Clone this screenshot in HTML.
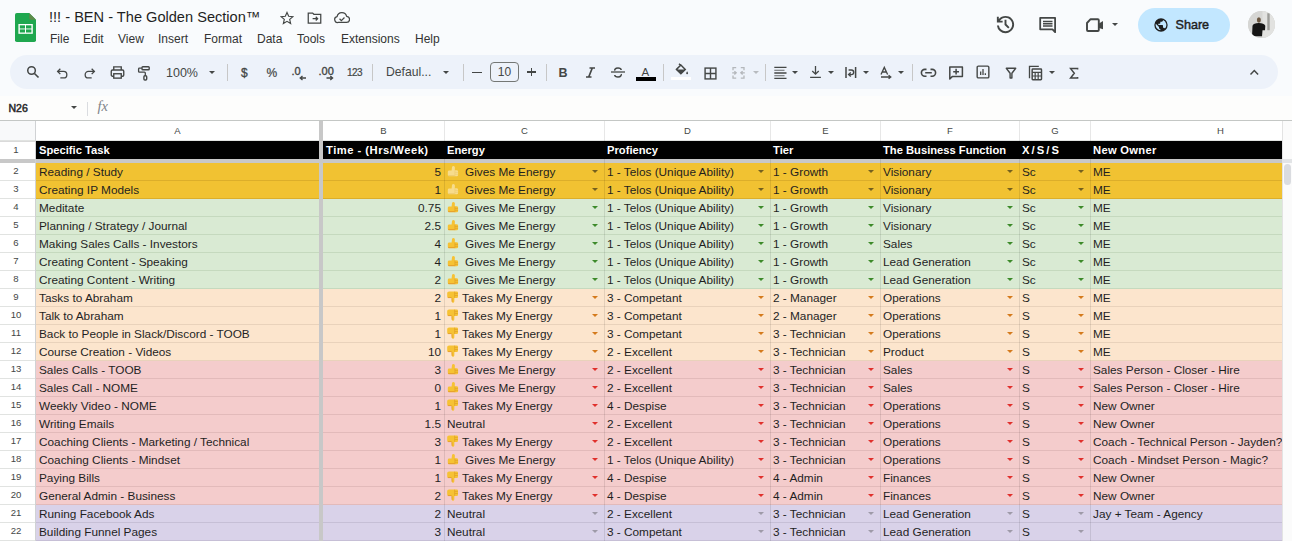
<!DOCTYPE html>
<html><head><meta charset="utf-8">
<style>
html,body{margin:0;padding:0;}
body{width:1292px;height:541px;overflow:hidden;position:relative;background:#f9fbfd;font-family:"Liberation Sans",sans-serif;color:#1f1f1f;}
.a{position:absolute;}
/* title bar */
.logo{position:absolute;left:15px;top:13px;width:21px;height:29px;}
.title{position:absolute;left:49px;top:6px;font-size:14.6px;line-height:22px;color:#1f1f1f;white-space:nowrap;}
.menu{position:absolute;top:30.8px;font-size:12px;line-height:16px;color:#333;white-space:nowrap;}
.ico{position:absolute;}
.share{position:absolute;left:1138px;top:8px;width:92px;height:34px;border-radius:17px;background:#c2e7ff;}
.share span{position:absolute;left:37.5px;top:7.6px;font-size:12.6px;line-height:18px;font-weight:normal;-webkit-text-stroke:0.45px #1f1f1f;letter-spacing:0px;color:#1f1f1f;}
.avatar{position:absolute;left:1248px;top:11px;width:27px;height:27px;border-radius:50%;overflow:hidden;background:#d6d6d3;}
/* toolbar */
.tb{position:absolute;left:10px;top:55px;width:1268px;height:34px;border-radius:17px;background:#edf2fa;}
.sep{position:absolute;top:64px;width:1px;height:17px;background:#c7c7c7;}
.tbt{position:absolute;font-size:12px;line-height:16px;color:#444746;white-space:nowrap;}
.dd{position:absolute;width:0;height:0;border-left:3.5px solid transparent;border-right:3.5px solid transparent;border-top:3.8px solid #444746;}
/* formula bar */
.fbar{position:absolute;left:0;top:96px;width:1292px;height:24px;background:#fdfdfc;}
/* grid */
.grid{position:absolute;left:0;top:120px;width:1292px;height:421px;background:#fff;}
.hline{position:absolute;left:0;width:1292px;height:1px;background:#c4c7c5;}
.corner{position:absolute;left:0;top:121px;width:35px;height:19px;background:#f8f9fa;}
.ch{position:absolute;top:121px;height:19px;line-height:19px;text-align:center;font-size:9.5px;color:#444746;}
.vl{position:absolute;width:1px;}
.hb{position:absolute;top:141px;height:18px;line-height:18px;font-size:11.2px;font-weight:bold;color:#fff;white-space:nowrap;}
.rw{position:absolute;left:36px;width:1246px;height:17px;border-bottom:1px solid;}
.rn{position:absolute;left:0;width:32px;height:18px;line-height:18.5px;text-align:center;font-size:9.6px;color:#444746;}
.t{position:absolute;height:18px;line-height:20.4px;font-size:11.8px;color:#1f1f1f;white-space:nowrap;}
.tr{text-align:right;}
.em{position:relative;top:2px;}
.ar{position:absolute;width:0;height:0;border-left:3.5px solid transparent;border-right:3.5px solid transparent;border-top:3.5px solid;}
</style></head>
<body>
<!-- title bar -->
<svg class="logo" viewBox="0 0 21 29">
  <path d="M1.8 0 H14.2 L21 6.8 V27.2 Q21 29 19.2 29 H1.8 Q0 29 0 27.2 V1.8 Q0 0 1.8 0 Z" fill="#1fa74f"/>
  <path d="M14.2 0 L21 6.8 H16 Q14.2 6.8 14.2 5 Z" fill="#5e8a4a"/>
  <rect x="3.4" y="11" width="14.4" height="9.8" fill="#fff"/>
  <rect x="4.8" y="12.3" width="5.2" height="3.2" fill="#1fa74f"/>
  <rect x="11" y="12.3" width="5.4" height="3.2" fill="#1fa74f"/>
  <rect x="4.8" y="16.4" width="5.2" height="3.1" fill="#1fa74f"/>
  <rect x="11" y="16.4" width="5.4" height="3.1" fill="#1fa74f"/>
</svg>
<div class="title">!!! - BEN - The Golden Section™</div>
<div class="menu" style="left:50px">File</div>
<div class="menu" style="left:83px">Edit</div>
<div class="menu" style="left:118px">View</div>
<div class="menu" style="left:158px">Insert</div>
<div class="menu" style="left:204px">Format</div>
<div class="menu" style="left:257px">Data</div>
<div class="menu" style="left:297px">Tools</div>
<div class="menu" style="left:341px">Extensions</div>
<div class="menu" style="left:415px">Help</div>

<!-- star / folder / cloud -->
<svg class="ico" style="left:280px;top:11px" width="14" height="14" viewBox="0 0 24 24"><path d="M12 2.5l2.9 6.6 7.1.6-5.4 4.7 1.6 7-6.2-3.7-6.2 3.7 1.6-7L2 9.7l7.1-.6z" fill="none" stroke="#444746" stroke-width="2"/></svg>
<svg class="ico" style="left:307px;top:11px" width="15" height="14" viewBox="0 0 24 22"><path d="M2 3h7l2 2h11v14H2z" fill="none" stroke="#444746" stroke-width="2"/><path d="M9 12h8M14 9l3 3-3 3" fill="none" stroke="#444746" stroke-width="2"/></svg>
<svg class="ico" style="left:334px;top:11px" width="16" height="13" viewBox="0 0 26 20"><path d="M7 18h13a5 5 0 0 0 .5-10A8 8 0 0 0 5 8.5 4.8 4.8 0 0 0 7 18z" fill="none" stroke="#444746" stroke-width="2"/><path d="M9 12l3 3 5-5" fill="none" stroke="#444746" stroke-width="2"/></svg>

<!-- right icons -->
<svg class="ico" style="left:993.8px;top:13.2px" width="23" height="23" viewBox="0 -960 960 960"><path d="M480-120q-138 0-240.5-91.5T122-440h82q14 104 92.5 172T480-200q117 0 198.5-81.5T760-480q0-117-81.5-198.5T480-760q-69 0-129 32t-101 88h110v80H120v-240h80v94q51-64 124.5-99T480-840q75 0 140.5 28.5t114 77q48.5 48.5 77 114T840-480q0 75-28.5 140.5t-77 114q-48.5 48.5-114 77T480-120Zm112-192L440-464v-216h80v184l128 128-56 56Z" fill="#444746"/></svg>
<svg class="ico" style="left:1036px;top:14px" width="24" height="22" viewBox="1036 14 24 22"><path d="M1040.2 17.8H1055.1V32.2L1052.5 29.3H1040.2Z" fill="none" stroke="#444746" stroke-width="1.8" stroke-linejoin="round"/><path d="M1043 21.6H1052.5M1043 23.8H1052.5M1043 26H1052.5" stroke="#444746" stroke-width="1.5"/></svg>
<svg class="ico" style="left:1084px;top:16px" width="22" height="18" viewBox="1084 16 22 18"><path d="M1087 23L1090.6 19.2H1097.8Q1098.8 19.2 1098.8 20.2V30Q1098.8 31 1097.8 31H1088Q1087 31 1087 30Z" fill="none" stroke="#444746" stroke-width="1.9" stroke-linejoin="round"/><path d="M1099 23.5L1103 20.9V29.3L1099 27.9Z" fill="#444746"/></svg>
<div class="dd" style="left:1112px;top:23px;border-left-width:3.2px;border-right-width:3.2px;border-top-width:3.4px"></div>
<div class="share">
  <svg style="position:absolute;left:15px;top:9px" width="16" height="16" viewBox="0 0 24 24"><path d="M12 2a10 10 0 1 0 0 20 10 10 0 0 0 0-20zm-1 17.9A8 8 0 0 1 4.2 10.2L9 15v1a2 2 0 0 0 2 2zm6.9-2.5A2 2 0 0 0 16 16h-1v-3a1 1 0 0 0-1-1H8v-2h2a1 1 0 0 0 1-1V7h2a2 2 0 0 0 2-2v-.4a8 8 0 0 1 2.9 12.8z" fill="#1f1f1f"/></svg>
  <span>Share</span>
</div>
<div class="avatar" style="left:1247.5px;top:10.8px;width:27px;height:27px;">
  <svg width="27" height="27" viewBox="1247.5 10.8 27 27"><rect x="1247.5" y="10.8" width="27" height="27" fill="#d6d6d4"/><rect x="1262" y="10.8" width="13" height="27" fill="#e2e2e0"/><rect x="1266.8" y="13" width="2.4" height="17" fill="#9c9c98"/><ellipse cx="1258.4" cy="19.8" rx="2" ry="2.7" fill="#6a5640"/><path d="M1251.5 36 L1252 25.5 Q1253 23 1258.3 22.8 Q1263.5 23 1264.8 25.5 L1264.5 30 L1262 30 L1261.5 36Z" fill="#151515"/></svg>
</div>

<!-- toolbar -->
<div class="tb"></div>
<!-- search -->
<svg class="ico" style="left:26px;top:65px" width="14" height="14" viewBox="0 0 24 24"><circle cx="9.5" cy="9.5" r="6.5" fill="none" stroke="#444746" stroke-width="2.6"/><path d="M14.5 14.5l7 7" stroke="#444746" stroke-width="2.8"/></svg>
<!-- undo -->
<svg class="ico" style="left:56px;top:66px" width="13" height="13" viewBox="0 0 24 24"><path d="M8 5L3 10l5 5" fill="none" stroke="#444746" stroke-width="2.4"/><path d="M3 10h11a6 6 0 0 1 0 12H8" fill="none" stroke="#444746" stroke-width="2.4"/></svg>
<!-- redo -->
<svg class="ico" style="left:83px;top:66px" width="13" height="13" viewBox="0 0 24 24"><path d="M16 5l5 5-5 5" fill="none" stroke="#444746" stroke-width="2.4"/><path d="M21 10H10a6 6 0 0 0 0 12h6" fill="none" stroke="#444746" stroke-width="2.4"/></svg>
<!-- print -->
<svg class="ico" style="left:110px;top:65px" width="15" height="15" viewBox="0 0 24 24"><path d="M6 8V3h12v5" fill="none" stroke="#444746" stroke-width="2.2"/><rect x="2" y="8" width="20" height="10" rx="2" fill="none" stroke="#444746" stroke-width="2.2"/><rect x="6" y="14" width="12" height="7" fill="#edf2fa" stroke="#444746" stroke-width="2.2"/></svg>
<!-- paint format -->
<svg class="ico" style="left:136px;top:64px" width="16" height="18" viewBox="136 64 16 18"><rect x="142" y="66.7" width="7.2" height="3" rx="0.8" fill="none" stroke="#444746" stroke-width="1.4"/><path d="M141.8 68.2H139.4Q138.6 68.2 138.6 69V71.4Q138.6 72.2 139.4 72.2H144.4Q145.3 72.2 145.3 73.1V75.6" fill="none" stroke="#444746" stroke-width="1.3"/><rect x="143.9" y="75.8" width="2.8" height="4.2" rx="1" fill="none" stroke="#444746" stroke-width="1.4"/></svg>
<div class="tbt" style="left:166px;top:65px;font-size:12.5px">100%</div>
<div class="dd" style="left:208.5px;top:71px"></div>
<div class="sep" style="left:227px"></div>
<div class="tbt" style="left:241px;top:65px;font-size:12px;-webkit-text-stroke:0.3px #444746">$</div>
<div class="tbt" style="left:266.5px;top:65px;font-size:12px;-webkit-text-stroke:0.2px #444746">%</div>
<div class="tbt" style="left:291.5px;top:63px;font-size:11px;-webkit-text-stroke:0.35px #444746">.0</div>
<svg class="ico" style="left:299px;top:74.5px" width="8" height="6" viewBox="0 0 8 6"><path d="M7 3H1.5M3.5 1L1.2 3 3.5 5" fill="none" stroke="#444746" stroke-width="1.3"/></svg>
<div class="tbt" style="left:318.5px;top:63px;font-size:11px;-webkit-text-stroke:0.35px #444746">.00</div>
<svg class="ico" style="left:325.5px;top:74.5px" width="8" height="6" viewBox="0 0 8 6"><path d="M0.5 3H6.3M4.3 1L6.6 3 4.3 5" fill="none" stroke="#444746" stroke-width="1.3"/></svg>
<div class="tbt" style="left:347px;top:64.5px;font-size:10px;letter-spacing:-0.6px;-webkit-text-stroke:0.2px #444746">123</div>
<div class="sep" style="left:372px"></div>
<div class="tbt" style="left:386px;top:64px;font-size:12.2px">Defaul...</div>
<div class="dd" style="left:442.5px;top:71px"></div>
<div class="sep" style="left:463px"></div>
<div class="a" style="left:472px;top:72px;width:10px;height:1.4px;background:#444746"></div>
<div class="a" style="left:490px;top:62px;width:27px;height:18px;border:1px solid #747775;border-radius:4px;"></div>
<div class="tbt" style="left:490px;top:64px;width:29px;text-align:center;font-size:12px">10</div>
<div class="a" style="left:527.3px;top:71.4px;width:8.6px;height:1.4px;background:#444746"></div>
<div class="a" style="left:530.9px;top:67.8px;width:1.4px;height:8.6px;background:#444746"></div>
<div class="sep" style="left:546px"></div>
<div class="tbt" style="left:558.5px;top:65px;font-size:12.5px;font-weight:bold">B</div>
<svg class="ico" style="left:585px;top:67px" width="11" height="11" viewBox="0 0 11 11"><path d="M4.5 1H10M1 10H6.5M7.3 1L3.7 10" fill="none" stroke="#444746" stroke-width="1.7"/></svg>
<!-- strikethrough -->
<svg class="ico" style="left:610px;top:67px" width="16" height="11" viewBox="0 0 16 11"><path d="M1 5H15" stroke="#444746" stroke-width="1.3"/><path d="M4.8 3.6C4.6 2.9 5 1 8 1C10.3 1 11.1 2.1 11.2 3" fill="none" stroke="#444746" stroke-width="1.5"/><path d="M11.2 7.1C11.4 7.6 11.2 10 8 10C5.5 10 4.8 8.8 4.7 8" fill="none" stroke="#444746" stroke-width="1.5"/></svg>
<!-- text color A -->
<div class="tbt" style="left:641.5px;top:63.5px;font-size:11.5px">A</div>
<div class="a" style="left:636px;top:77px;width:20px;height:3.5px;background:#000"></div>
<div class="sep" style="left:663px"></div>
<!-- fill -->
<svg class="ico" style="left:673.5px;top:62.5px" width="15" height="14" viewBox="0 0 24 22"><path d="M8 1l2 2M4 10l7-7 7 7-7 7z" fill="none" stroke="#444746" stroke-width="2.4"/><path d="M4 10h14l-7 7z" fill="#444746"/><path d="M21 13c1 1.5 1.5 2.5 1.5 3.3a1.5 1.5 0 0 1-3 0c0-.8.5-1.8 1.5-3.3z" fill="#444746"/></svg>
<div class="a" style="left:671px;top:77px;width:20px;height:3px;background:#fff"></div>
<!-- borders -->
<svg class="ico" style="left:703.5px;top:66.5px" width="13" height="13" viewBox="0 0 24 24"><rect x="2" y="2" width="20" height="20" fill="none" stroke="#444746" stroke-width="2.6"/><path d="M12 2v20M2 12h20" stroke="#444746" stroke-width="2.6"/></svg>
<!-- merge disabled -->
<svg class="ico" style="left:730px;top:65px" width="17" height="16" viewBox="730 65 17 16"><path d="M736.2 67.6H733V70.2M733 75.4V78.1H736.2M740.8 67.6H744V70.2M744 75.4V78.1H740.8" fill="none" stroke="#b4b7bb" stroke-width="1.3"/><path d="M732.2 72.8H735.6M734.4 71.2L736.2 72.8L734.4 74.4M744.8 72.8H741.4M742.6 71.2L740.8 72.8L742.6 74.4" fill="none" stroke="#b4b7bb" stroke-width="1.3"/></svg>
<div class="dd" style="left:753px;top:71px;border-top-color:#b8bbbf"></div>
<div class="sep" style="left:765px"></div>
<!-- align -->
<svg class="ico" style="left:774px;top:66px" width="13" height="14" viewBox="774 66 13 14"><path d="M774.3 67.4H786.5M774.3 73H786.5M774.3 78.4H786.5" stroke="#444746" stroke-width="1.3"/><path d="M774.3 70.2H784.5M774.3 75.7H784.5" stroke="#444746" stroke-width="1.1" opacity="0.8"/></svg>
<div class="dd" style="left:792.3px;top:71px"></div>
<!-- valign -->
<svg class="ico" style="left:809px;top:65px" width="13" height="14" viewBox="0 0 24 26"><path d="M12 2v15M6 11l6 6 6-6M2 23h20" fill="none" stroke="#444746" stroke-width="2.4"/></svg>
<div class="dd" style="left:827.7px;top:71px"></div>
<!-- wrap -->
<svg class="ico" style="left:844px;top:66px" width="14" height="13" viewBox="844 66 14 13"><path d="M846 67V78M855.6 67V78" stroke="#444746" stroke-width="1.5"/><path d="M848.6 70H851.4A2.3 2.3 0 0 1 851.4 74.6H849.2" fill="none" stroke="#444746" stroke-width="1.4"/><path d="M850.8 72.6L848.6 74.6L850.8 76.6" fill="none" stroke="#444746" stroke-width="1.4"/></svg>
<div class="dd" style="left:863px;top:71px"></div>
<!-- rotate -->
<svg class="ico" style="left:879px;top:65px" width="14" height="15" viewBox="879 65 14 15"><path d="M881 74.6L884.3 67.4L887.6 74.6M882.2 72H886.4" fill="none" stroke="#444746" stroke-width="1.3"/><path d="M881 77H890.5M888.6 75.2L890.8 77L888.6 78.8" fill="none" stroke="#444746" stroke-width="1.3"/></svg>
<div class="dd" style="left:897.8px;top:71px"></div>
<div class="sep" style="left:912px"></div>
<!-- link -->
<svg class="ico" style="left:920px;top:67px" width="17" height="11" viewBox="920 67 17 11"><path d="M926.5 69.4H924.8A3.4 3.4 0 0 0 924.8 76.2H926.5M930.5 69.4H932.2A3.4 3.4 0 0 1 932.2 76.2H930.5M925.2 72.8H931.8" fill="none" stroke="#444746" stroke-width="1.6"/></svg>
<!-- comment add -->
<svg class="ico" style="left:948px;top:65px" width="16" height="16" viewBox="948 65 16 16"><path d="M949.8 66.9H962.4V76.6H952.2L949.8 79Z" fill="none" stroke="#444746" stroke-width="1.5" stroke-linejoin="round"/><path d="M956.1 68.8V74.6M953.2 71.7H959" stroke="#444746" stroke-width="1.5"/></svg>
<!-- chart -->
<svg class="ico" style="left:976px;top:65px" width="14" height="14" viewBox="0 0 24 24"><rect x="2" y="2" width="20" height="20" rx="2" fill="none" stroke="#444746" stroke-width="2.4"/><path d="M8 17v-6M12 17V7M16 17v-3" stroke="#444746" stroke-width="2.2"/></svg>
<!-- filter -->
<svg class="ico" style="left:1004px;top:66px" width="14" height="14" viewBox="1004 66 14 14"><path d="M1006.3 68.3H1015.7L1011.9 73.2V78H1010.1V73.2Z" fill="none" stroke="#444746" stroke-width="1.4" stroke-linejoin="round"/></svg>
<!-- filter views / calc -->
<svg class="ico" style="left:1028px;top:65px" width="15" height="16" viewBox="0 0 22 24"><path d="M2 20V2h14" fill="none" stroke="#444746" stroke-width="2"/><rect x="6" y="6" width="14" height="16" rx="1" fill="none" stroke="#444746" stroke-width="2.2"/><path d="M6 11h14M10.5 11v11M15 11v11M6 16.5h14" stroke="#444746" stroke-width="1.8"/></svg>
<div class="dd" style="left:1048.5px;top:71px"></div>
<!-- sigma -->
<svg class="ico" style="left:1069px;top:67px" width="10" height="13" viewBox="1069 67 10 13"><path d="M1077.6 69.6V68.6H1070.6L1074.3 73.3L1070.6 78H1077.6V77" fill="none" stroke="#444746" stroke-width="1.5"/></svg>
<!-- caret up -->
<svg class="ico" style="left:1249px;top:68px" width="11" height="9" viewBox="1249 68 11 9"><path d="M1250.5 74.6L1254.3 70.6L1258.1 74.6" fill="none" stroke="#444746" stroke-width="1.5"/></svg>

<!-- formula bar -->
<div class="fbar"></div>
<div class="tbt" style="left:8.5px;top:100px;font-size:10.5px;font-weight:normal;-webkit-text-stroke:0.5px #2a2a2a;color:#2a2a2a">N26</div>
<div class="dd" style="left:71px;top:106px"></div>
<div class="a" style="left:87px;top:102px;width:1px;height:14px;background:#dadce0"></div>
<div class="tbt" style="left:97.5px;top:98px;font-size:14.5px;font-style:italic;font-family:'Liberation Serif',serif;color:#80848a">fx</div>

<!-- grid -->
<div class="grid"></div>
<div class="corner"></div>
<div class="a" style="left:0;top:140px;width:35px;height:2px;background:#dadada"></div>
<div class="hline" style="top:120px"></div>
<div class="a" style="left:0;top:140px;width:1282px;height:1px;background:#e1e3e1"></div>
<div class="ch" style="left:36px;width:283px">A</div>
<div class="ch" style="left:323px;width:121px">B</div>
<div class="ch" style="left:445px;width:159px">C</div>
<div class="ch" style="left:605px;width:165px">D</div>
<div class="ch" style="left:771px;width:109px">E</div>
<div class="ch" style="left:881px;width:138px">F</div>
<div class="ch" style="left:1020px;width:70px">G</div>
<div class="ch" style="left:1091px;width:259px">H</div>
<!-- header row 1 -->
<div class="a" style="left:36px;top:141px;width:1246px;height:18px;background:#000"></div>
<div class="hb" style="left:39px;">Specific Task</div>
<div class="hb" style="left:326px;letter-spacing:0.5px;">Time - (Hrs/Week)</div>
<div class="hb" style="left:447px;">Energy</div>
<div class="hb" style="left:607px;">Profiency</div>
<div class="hb" style="left:773px;">Tier</div>
<div class="hb" style="left:883px;">The Business Function</div>
<div class="hb" style="left:1022px;letter-spacing:2.1px;">X/S/S</div>
<div class="hb" style="left:1093px;letter-spacing:0.3px;">New Owner</div>
<div class="rn" style="top:141px">1</div>
<!-- frozen separator -->
<div class="a" style="left:0;top:159px;width:1292px;height:4px;background:#c8c8c8"></div>
<div class="rw" style="top:163px;background:#f1c232;border-bottom-color:#dcae2a"></div>
<div class="rn" style="top:162px">2</div>
<div class="a" style="left:0;top:180px;width:35px;height:1px;background:#e1e3e1"></div>
<div class="t" style="left:39px;top:162px">Reading / Study</div>
<div class="t tr" style="left:323px;width:118px;top:162px">5</div>
<div class="t" style="left:447px;top:162px"><svg class="em" width="12" height="12" viewBox="0 0 12 12" style="overflow:visible"><path d="M4.6 4.5 L5 1.2 Q5.3 -0.1 6.5 0 Q7.9 0.2 7.9 1.6 L7.8 4.3 H10 Q11.2 4.4 11.1 5.6 V9.1 Q11 10.3 9.8 10.3 H2.2 Q0.8 10.3 0.8 8.9 V5.8 Q0.8 4.5 2.2 4.5 Z" fill="#f7dc8c"/><path d="M7.9 4.6V10.2M8.1 6.4H11M8.1 8.3H11" stroke="#eccb70" stroke-width="0.6" fill="none"/><path d="M1.2 9.6H7.6" stroke="#eac56a" stroke-width="0.7"/></svg></div>
<div class="t" style="left:465px;top:162px">Gives Me Energy</div>
<div class="t" style="left:607px;top:162px">1 - Telos (Unique Ability)</div>
<div class="t" style="left:773px;top:162px">1 - Growth</div>
<div class="t" style="left:883px;top:162px">Visionary</div>
<div class="t" style="left:1022px;top:162px">Sc</div>
<div class="t" style="left:1093px;top:162px">ME</div>
<div class="ar" style="left:592.0px;top:170px;border-top-color:#75601e"></div>
<div class="ar" style="left:757.5px;top:170px;border-top-color:#75601e"></div>
<div class="ar" style="left:867.7px;top:170px;border-top-color:#75601e"></div>
<div class="ar" style="left:1006.5px;top:170px;border-top-color:#75601e"></div>
<div class="ar" style="left:1077.8px;top:170px;border-top-color:#75601e"></div>
<div class="rw" style="top:181px;background:#f1c232;border-bottom-color:#dcae2a"></div>
<div class="rn" style="top:180px">3</div>
<div class="a" style="left:0;top:198px;width:35px;height:1px;background:#e1e3e1"></div>
<div class="t" style="left:39px;top:180px">Creating IP Models</div>
<div class="t tr" style="left:323px;width:118px;top:180px">1</div>
<div class="t" style="left:447px;top:180px"><svg class="em" width="12" height="12" viewBox="0 0 12 12" style="overflow:visible"><path d="M4.6 4.5 L5 1.2 Q5.3 -0.1 6.5 0 Q7.9 0.2 7.9 1.6 L7.8 4.3 H10 Q11.2 4.4 11.1 5.6 V9.1 Q11 10.3 9.8 10.3 H2.2 Q0.8 10.3 0.8 8.9 V5.8 Q0.8 4.5 2.2 4.5 Z" fill="#f7dc8c"/><path d="M7.9 4.6V10.2M8.1 6.4H11M8.1 8.3H11" stroke="#eccb70" stroke-width="0.6" fill="none"/><path d="M1.2 9.6H7.6" stroke="#eac56a" stroke-width="0.7"/></svg></div>
<div class="t" style="left:465px;top:180px">Gives Me Energy</div>
<div class="t" style="left:607px;top:180px">1 - Telos (Unique Ability)</div>
<div class="t" style="left:773px;top:180px">1 - Growth</div>
<div class="t" style="left:883px;top:180px">Visionary</div>
<div class="t" style="left:1022px;top:180px">Sc</div>
<div class="t" style="left:1093px;top:180px">ME</div>
<div class="ar" style="left:592.0px;top:188px;border-top-color:#75601e"></div>
<div class="ar" style="left:757.5px;top:188px;border-top-color:#75601e"></div>
<div class="ar" style="left:867.7px;top:188px;border-top-color:#75601e"></div>
<div class="ar" style="left:1006.5px;top:188px;border-top-color:#75601e"></div>
<div class="ar" style="left:1077.8px;top:188px;border-top-color:#75601e"></div>
<div class="rw" style="top:199px;background:#d9ead3;border-bottom-color:#c5d9be"></div>
<div class="rn" style="top:198px">4</div>
<div class="a" style="left:0;top:216px;width:35px;height:1px;background:#e1e3e1"></div>
<div class="t" style="left:39px;top:198px">Meditate</div>
<div class="t tr" style="left:323px;width:118px;top:198px">0.75</div>
<div class="t" style="left:447px;top:198px"><svg class="em" width="12" height="12" viewBox="0 0 12 12" style="overflow:visible"><path d="M4.6 4.5 L5 1.2 Q5.3 -0.1 6.5 0 Q7.9 0.2 7.9 1.6 L7.8 4.3 H10 Q11.2 4.4 11.1 5.6 V9.1 Q11 10.3 9.8 10.3 H2.2 Q0.8 10.3 0.8 8.9 V5.8 Q0.8 4.5 2.2 4.5 Z" fill="#f6c234"/><path d="M7.9 4.6V10.2M8.1 6.4H11M8.1 8.3H11" stroke="#dc9a22" stroke-width="0.6" fill="none"/><path d="M1.2 9.6H7.6" stroke="#e0902a" stroke-width="0.7"/></svg></div>
<div class="t" style="left:465px;top:198px">Gives Me Energy</div>
<div class="t" style="left:607px;top:198px">1 - Telos (Unique Ability)</div>
<div class="t" style="left:773px;top:198px">1 - Growth</div>
<div class="t" style="left:883px;top:198px">Visionary</div>
<div class="t" style="left:1022px;top:198px">Sc</div>
<div class="t" style="left:1093px;top:198px">ME</div>
<div class="ar" style="left:592.0px;top:206px;border-top-color:#3d8a2a"></div>
<div class="ar" style="left:757.5px;top:206px;border-top-color:#3d8a2a"></div>
<div class="ar" style="left:867.7px;top:206px;border-top-color:#3d8a2a"></div>
<div class="ar" style="left:1006.5px;top:206px;border-top-color:#3d8a2a"></div>
<div class="ar" style="left:1077.8px;top:206px;border-top-color:#3d8a2a"></div>
<div class="rw" style="top:217px;background:#d9ead3;border-bottom-color:#c5d9be"></div>
<div class="rn" style="top:216px">5</div>
<div class="a" style="left:0;top:234px;width:35px;height:1px;background:#e1e3e1"></div>
<div class="t" style="left:39px;top:216px">Planning / Strategy / Journal</div>
<div class="t tr" style="left:323px;width:118px;top:216px">2.5</div>
<div class="t" style="left:447px;top:216px"><svg class="em" width="12" height="12" viewBox="0 0 12 12" style="overflow:visible"><path d="M4.6 4.5 L5 1.2 Q5.3 -0.1 6.5 0 Q7.9 0.2 7.9 1.6 L7.8 4.3 H10 Q11.2 4.4 11.1 5.6 V9.1 Q11 10.3 9.8 10.3 H2.2 Q0.8 10.3 0.8 8.9 V5.8 Q0.8 4.5 2.2 4.5 Z" fill="#f6c234"/><path d="M7.9 4.6V10.2M8.1 6.4H11M8.1 8.3H11" stroke="#dc9a22" stroke-width="0.6" fill="none"/><path d="M1.2 9.6H7.6" stroke="#e0902a" stroke-width="0.7"/></svg></div>
<div class="t" style="left:465px;top:216px">Gives Me Energy</div>
<div class="t" style="left:607px;top:216px">1 - Telos (Unique Ability)</div>
<div class="t" style="left:773px;top:216px">1 - Growth</div>
<div class="t" style="left:883px;top:216px">Visionary</div>
<div class="t" style="left:1022px;top:216px">Sc</div>
<div class="t" style="left:1093px;top:216px">ME</div>
<div class="ar" style="left:592.0px;top:224px;border-top-color:#3d8a2a"></div>
<div class="ar" style="left:757.5px;top:224px;border-top-color:#3d8a2a"></div>
<div class="ar" style="left:867.7px;top:224px;border-top-color:#3d8a2a"></div>
<div class="ar" style="left:1006.5px;top:224px;border-top-color:#3d8a2a"></div>
<div class="ar" style="left:1077.8px;top:224px;border-top-color:#3d8a2a"></div>
<div class="rw" style="top:235px;background:#d9ead3;border-bottom-color:#c5d9be"></div>
<div class="rn" style="top:234px">6</div>
<div class="a" style="left:0;top:252px;width:35px;height:1px;background:#e1e3e1"></div>
<div class="t" style="left:39px;top:234px">Making Sales Calls - Investors</div>
<div class="t tr" style="left:323px;width:118px;top:234px">4</div>
<div class="t" style="left:447px;top:234px"><svg class="em" width="12" height="12" viewBox="0 0 12 12" style="overflow:visible"><path d="M4.6 4.5 L5 1.2 Q5.3 -0.1 6.5 0 Q7.9 0.2 7.9 1.6 L7.8 4.3 H10 Q11.2 4.4 11.1 5.6 V9.1 Q11 10.3 9.8 10.3 H2.2 Q0.8 10.3 0.8 8.9 V5.8 Q0.8 4.5 2.2 4.5 Z" fill="#f6c234"/><path d="M7.9 4.6V10.2M8.1 6.4H11M8.1 8.3H11" stroke="#dc9a22" stroke-width="0.6" fill="none"/><path d="M1.2 9.6H7.6" stroke="#e0902a" stroke-width="0.7"/></svg></div>
<div class="t" style="left:465px;top:234px">Gives Me Energy</div>
<div class="t" style="left:607px;top:234px">1 - Telos (Unique Ability)</div>
<div class="t" style="left:773px;top:234px">1 - Growth</div>
<div class="t" style="left:883px;top:234px">Sales</div>
<div class="t" style="left:1022px;top:234px">Sc</div>
<div class="t" style="left:1093px;top:234px">ME</div>
<div class="ar" style="left:592.0px;top:242px;border-top-color:#3d8a2a"></div>
<div class="ar" style="left:757.5px;top:242px;border-top-color:#3d8a2a"></div>
<div class="ar" style="left:867.7px;top:242px;border-top-color:#3d8a2a"></div>
<div class="ar" style="left:1006.5px;top:242px;border-top-color:#3d8a2a"></div>
<div class="ar" style="left:1077.8px;top:242px;border-top-color:#3d8a2a"></div>
<div class="rw" style="top:253px;background:#d9ead3;border-bottom-color:#c5d9be"></div>
<div class="rn" style="top:252px">7</div>
<div class="a" style="left:0;top:270px;width:35px;height:1px;background:#e1e3e1"></div>
<div class="t" style="left:39px;top:252px">Creating Content - Speaking</div>
<div class="t tr" style="left:323px;width:118px;top:252px">4</div>
<div class="t" style="left:447px;top:252px"><svg class="em" width="12" height="12" viewBox="0 0 12 12" style="overflow:visible"><path d="M4.6 4.5 L5 1.2 Q5.3 -0.1 6.5 0 Q7.9 0.2 7.9 1.6 L7.8 4.3 H10 Q11.2 4.4 11.1 5.6 V9.1 Q11 10.3 9.8 10.3 H2.2 Q0.8 10.3 0.8 8.9 V5.8 Q0.8 4.5 2.2 4.5 Z" fill="#f6c234"/><path d="M7.9 4.6V10.2M8.1 6.4H11M8.1 8.3H11" stroke="#dc9a22" stroke-width="0.6" fill="none"/><path d="M1.2 9.6H7.6" stroke="#e0902a" stroke-width="0.7"/></svg></div>
<div class="t" style="left:465px;top:252px">Gives Me Energy</div>
<div class="t" style="left:607px;top:252px">1 - Telos (Unique Ability)</div>
<div class="t" style="left:773px;top:252px">1 - Growth</div>
<div class="t" style="left:883px;top:252px">Lead Generation</div>
<div class="t" style="left:1022px;top:252px">Sc</div>
<div class="t" style="left:1093px;top:252px">ME</div>
<div class="ar" style="left:592.0px;top:260px;border-top-color:#3d8a2a"></div>
<div class="ar" style="left:757.5px;top:260px;border-top-color:#3d8a2a"></div>
<div class="ar" style="left:867.7px;top:260px;border-top-color:#3d8a2a"></div>
<div class="ar" style="left:1006.5px;top:260px;border-top-color:#3d8a2a"></div>
<div class="ar" style="left:1077.8px;top:260px;border-top-color:#3d8a2a"></div>
<div class="rw" style="top:271px;background:#d9ead3;border-bottom-color:#c5d9be"></div>
<div class="rn" style="top:270px">8</div>
<div class="a" style="left:0;top:288px;width:35px;height:1px;background:#e1e3e1"></div>
<div class="t" style="left:39px;top:270px">Creating Content - Writing</div>
<div class="t tr" style="left:323px;width:118px;top:270px">2</div>
<div class="t" style="left:447px;top:270px"><svg class="em" width="12" height="12" viewBox="0 0 12 12" style="overflow:visible"><path d="M4.6 4.5 L5 1.2 Q5.3 -0.1 6.5 0 Q7.9 0.2 7.9 1.6 L7.8 4.3 H10 Q11.2 4.4 11.1 5.6 V9.1 Q11 10.3 9.8 10.3 H2.2 Q0.8 10.3 0.8 8.9 V5.8 Q0.8 4.5 2.2 4.5 Z" fill="#f6c234"/><path d="M7.9 4.6V10.2M8.1 6.4H11M8.1 8.3H11" stroke="#dc9a22" stroke-width="0.6" fill="none"/><path d="M1.2 9.6H7.6" stroke="#e0902a" stroke-width="0.7"/></svg></div>
<div class="t" style="left:465px;top:270px">Gives Me Energy</div>
<div class="t" style="left:607px;top:270px">1 - Telos (Unique Ability)</div>
<div class="t" style="left:773px;top:270px">1 - Growth</div>
<div class="t" style="left:883px;top:270px">Lead Generation</div>
<div class="t" style="left:1022px;top:270px">Sc</div>
<div class="t" style="left:1093px;top:270px">ME</div>
<div class="ar" style="left:592.0px;top:278px;border-top-color:#3d8a2a"></div>
<div class="ar" style="left:757.5px;top:278px;border-top-color:#3d8a2a"></div>
<div class="ar" style="left:867.7px;top:278px;border-top-color:#3d8a2a"></div>
<div class="ar" style="left:1006.5px;top:278px;border-top-color:#3d8a2a"></div>
<div class="ar" style="left:1077.8px;top:278px;border-top-color:#3d8a2a"></div>
<div class="rw" style="top:289px;background:#fce5cd;border-bottom-color:#e9d2bb"></div>
<div class="rn" style="top:288px">9</div>
<div class="a" style="left:0;top:306px;width:35px;height:1px;background:#e1e3e1"></div>
<div class="t" style="left:39px;top:288px">Tasks to Abraham</div>
<div class="t tr" style="left:323px;width:118px;top:288px">2</div>
<div class="t" style="left:447px;top:288px"><svg class="em" width="12" height="12" viewBox="0 0 12 12" style="overflow:visible"><path d="M2 -0.6 H9.8 Q11 -0.6 11 0.7 V4.7 Q11 6 9.8 6 H7.4 L7.3 9.6 Q7.1 10.8 6 10.8 Q4.9 10.7 4.8 9.5 L4.6 6 H1.5 Q0.2 6 0.2 4.6 V1 Q0.2 -0.6 2 -0.6Z" fill="#f6c234"/><path d="M7.6 -0.4V5.8M7.8 1.4H10.8M7.8 3.5H10.8" stroke="#dc9a22" stroke-width="0.6" fill="none"/><path d="M0.8 5.6H4.6M4.9 6.2L5.1 9.8" stroke="#e0902a" stroke-width="0.7" fill="none"/></svg></div>
<div class="t" style="left:462px;top:288px">Takes My Energy</div>
<div class="t" style="left:607px;top:288px">3 - Competant</div>
<div class="t" style="left:773px;top:288px">2 - Manager</div>
<div class="t" style="left:883px;top:288px">Operations</div>
<div class="t" style="left:1022px;top:288px">S</div>
<div class="t" style="left:1093px;top:288px">ME</div>
<div class="ar" style="left:592.0px;top:296px;border-top-color:#d47a1c"></div>
<div class="ar" style="left:757.5px;top:296px;border-top-color:#d47a1c"></div>
<div class="ar" style="left:867.7px;top:296px;border-top-color:#d47a1c"></div>
<div class="ar" style="left:1006.5px;top:296px;border-top-color:#d47a1c"></div>
<div class="ar" style="left:1077.8px;top:296px;border-top-color:#d47a1c"></div>
<div class="rw" style="top:307px;background:#fce5cd;border-bottom-color:#e9d2bb"></div>
<div class="rn" style="top:306px">10</div>
<div class="a" style="left:0;top:324px;width:35px;height:1px;background:#e1e3e1"></div>
<div class="t" style="left:39px;top:306px">Talk to Abraham</div>
<div class="t tr" style="left:323px;width:118px;top:306px">1</div>
<div class="t" style="left:447px;top:306px"><svg class="em" width="12" height="12" viewBox="0 0 12 12" style="overflow:visible"><path d="M2 -0.6 H9.8 Q11 -0.6 11 0.7 V4.7 Q11 6 9.8 6 H7.4 L7.3 9.6 Q7.1 10.8 6 10.8 Q4.9 10.7 4.8 9.5 L4.6 6 H1.5 Q0.2 6 0.2 4.6 V1 Q0.2 -0.6 2 -0.6Z" fill="#f6c234"/><path d="M7.6 -0.4V5.8M7.8 1.4H10.8M7.8 3.5H10.8" stroke="#dc9a22" stroke-width="0.6" fill="none"/><path d="M0.8 5.6H4.6M4.9 6.2L5.1 9.8" stroke="#e0902a" stroke-width="0.7" fill="none"/></svg></div>
<div class="t" style="left:462px;top:306px">Takes My Energy</div>
<div class="t" style="left:607px;top:306px">3 - Competant</div>
<div class="t" style="left:773px;top:306px">2 - Manager</div>
<div class="t" style="left:883px;top:306px">Operations</div>
<div class="t" style="left:1022px;top:306px">S</div>
<div class="t" style="left:1093px;top:306px">ME</div>
<div class="ar" style="left:592.0px;top:314px;border-top-color:#d47a1c"></div>
<div class="ar" style="left:757.5px;top:314px;border-top-color:#d47a1c"></div>
<div class="ar" style="left:867.7px;top:314px;border-top-color:#d47a1c"></div>
<div class="ar" style="left:1006.5px;top:314px;border-top-color:#d47a1c"></div>
<div class="ar" style="left:1077.8px;top:314px;border-top-color:#d47a1c"></div>
<div class="rw" style="top:325px;background:#fce5cd;border-bottom-color:#e9d2bb"></div>
<div class="rn" style="top:324px">11</div>
<div class="a" style="left:0;top:342px;width:35px;height:1px;background:#e1e3e1"></div>
<div class="t" style="left:39px;top:324px">Back to People in Slack/Discord - TOOB</div>
<div class="t tr" style="left:323px;width:118px;top:324px">1</div>
<div class="t" style="left:447px;top:324px"><svg class="em" width="12" height="12" viewBox="0 0 12 12" style="overflow:visible"><path d="M2 -0.6 H9.8 Q11 -0.6 11 0.7 V4.7 Q11 6 9.8 6 H7.4 L7.3 9.6 Q7.1 10.8 6 10.8 Q4.9 10.7 4.8 9.5 L4.6 6 H1.5 Q0.2 6 0.2 4.6 V1 Q0.2 -0.6 2 -0.6Z" fill="#f6c234"/><path d="M7.6 -0.4V5.8M7.8 1.4H10.8M7.8 3.5H10.8" stroke="#dc9a22" stroke-width="0.6" fill="none"/><path d="M0.8 5.6H4.6M4.9 6.2L5.1 9.8" stroke="#e0902a" stroke-width="0.7" fill="none"/></svg></div>
<div class="t" style="left:462px;top:324px">Takes My Energy</div>
<div class="t" style="left:607px;top:324px">3 - Competant</div>
<div class="t" style="left:773px;top:324px">3 - Technician</div>
<div class="t" style="left:883px;top:324px">Operations</div>
<div class="t" style="left:1022px;top:324px">S</div>
<div class="t" style="left:1093px;top:324px">ME</div>
<div class="ar" style="left:592.0px;top:332px;border-top-color:#d47a1c"></div>
<div class="ar" style="left:757.5px;top:332px;border-top-color:#d47a1c"></div>
<div class="ar" style="left:867.7px;top:332px;border-top-color:#d47a1c"></div>
<div class="ar" style="left:1006.5px;top:332px;border-top-color:#d47a1c"></div>
<div class="ar" style="left:1077.8px;top:332px;border-top-color:#d47a1c"></div>
<div class="rw" style="top:343px;background:#fce5cd;border-bottom-color:#e9d2bb"></div>
<div class="rn" style="top:342px">12</div>
<div class="a" style="left:0;top:360px;width:35px;height:1px;background:#e1e3e1"></div>
<div class="t" style="left:39px;top:342px">Course Creation - Videos</div>
<div class="t tr" style="left:323px;width:118px;top:342px">10</div>
<div class="t" style="left:447px;top:342px"><svg class="em" width="12" height="12" viewBox="0 0 12 12" style="overflow:visible"><path d="M2 -0.6 H9.8 Q11 -0.6 11 0.7 V4.7 Q11 6 9.8 6 H7.4 L7.3 9.6 Q7.1 10.8 6 10.8 Q4.9 10.7 4.8 9.5 L4.6 6 H1.5 Q0.2 6 0.2 4.6 V1 Q0.2 -0.6 2 -0.6Z" fill="#f6c234"/><path d="M7.6 -0.4V5.8M7.8 1.4H10.8M7.8 3.5H10.8" stroke="#dc9a22" stroke-width="0.6" fill="none"/><path d="M0.8 5.6H4.6M4.9 6.2L5.1 9.8" stroke="#e0902a" stroke-width="0.7" fill="none"/></svg></div>
<div class="t" style="left:462px;top:342px">Takes My Energy</div>
<div class="t" style="left:607px;top:342px">2 - Excellent</div>
<div class="t" style="left:773px;top:342px">3 - Technician</div>
<div class="t" style="left:883px;top:342px">Product</div>
<div class="t" style="left:1022px;top:342px">S</div>
<div class="t" style="left:1093px;top:342px">ME</div>
<div class="ar" style="left:592.0px;top:350px;border-top-color:#d47a1c"></div>
<div class="ar" style="left:757.5px;top:350px;border-top-color:#d47a1c"></div>
<div class="ar" style="left:867.7px;top:350px;border-top-color:#d47a1c"></div>
<div class="ar" style="left:1006.5px;top:350px;border-top-color:#d47a1c"></div>
<div class="ar" style="left:1077.8px;top:350px;border-top-color:#d47a1c"></div>
<div class="rw" style="top:361px;background:#f4cccc;border-bottom-color:#e2baba"></div>
<div class="rn" style="top:360px">13</div>
<div class="a" style="left:0;top:378px;width:35px;height:1px;background:#e1e3e1"></div>
<div class="t" style="left:39px;top:360px">Sales Calls - TOOB</div>
<div class="t tr" style="left:323px;width:118px;top:360px">3</div>
<div class="t" style="left:447px;top:360px"><svg class="em" width="12" height="12" viewBox="0 0 12 12" style="overflow:visible"><path d="M4.6 4.5 L5 1.2 Q5.3 -0.1 6.5 0 Q7.9 0.2 7.9 1.6 L7.8 4.3 H10 Q11.2 4.4 11.1 5.6 V9.1 Q11 10.3 9.8 10.3 H2.2 Q0.8 10.3 0.8 8.9 V5.8 Q0.8 4.5 2.2 4.5 Z" fill="#f6c234"/><path d="M7.9 4.6V10.2M8.1 6.4H11M8.1 8.3H11" stroke="#dc9a22" stroke-width="0.6" fill="none"/><path d="M1.2 9.6H7.6" stroke="#e0902a" stroke-width="0.7"/></svg></div>
<div class="t" style="left:465px;top:360px">Gives Me Energy</div>
<div class="t" style="left:607px;top:360px">2 - Excellent</div>
<div class="t" style="left:773px;top:360px">3 - Technician</div>
<div class="t" style="left:883px;top:360px">Sales</div>
<div class="t" style="left:1022px;top:360px">S</div>
<div class="t" style="left:1093px;top:360px">Sales Person - Closer - Hire</div>
<div class="ar" style="left:592.0px;top:368px;border-top-color:#e0302c"></div>
<div class="ar" style="left:757.5px;top:368px;border-top-color:#e0302c"></div>
<div class="ar" style="left:867.7px;top:368px;border-top-color:#e0302c"></div>
<div class="ar" style="left:1006.5px;top:368px;border-top-color:#e0302c"></div>
<div class="ar" style="left:1077.8px;top:368px;border-top-color:#e0302c"></div>
<div class="rw" style="top:379px;background:#f4cccc;border-bottom-color:#e2baba"></div>
<div class="rn" style="top:378px">14</div>
<div class="a" style="left:0;top:396px;width:35px;height:1px;background:#e1e3e1"></div>
<div class="t" style="left:39px;top:378px">Sales Call - NOME</div>
<div class="t tr" style="left:323px;width:118px;top:378px">0</div>
<div class="t" style="left:447px;top:378px"><svg class="em" width="12" height="12" viewBox="0 0 12 12" style="overflow:visible"><path d="M4.6 4.5 L5 1.2 Q5.3 -0.1 6.5 0 Q7.9 0.2 7.9 1.6 L7.8 4.3 H10 Q11.2 4.4 11.1 5.6 V9.1 Q11 10.3 9.8 10.3 H2.2 Q0.8 10.3 0.8 8.9 V5.8 Q0.8 4.5 2.2 4.5 Z" fill="#f6c234"/><path d="M7.9 4.6V10.2M8.1 6.4H11M8.1 8.3H11" stroke="#dc9a22" stroke-width="0.6" fill="none"/><path d="M1.2 9.6H7.6" stroke="#e0902a" stroke-width="0.7"/></svg></div>
<div class="t" style="left:465px;top:378px">Gives Me Energy</div>
<div class="t" style="left:607px;top:378px">2 - Excellent</div>
<div class="t" style="left:773px;top:378px">3 - Technician</div>
<div class="t" style="left:883px;top:378px">Sales</div>
<div class="t" style="left:1022px;top:378px">S</div>
<div class="t" style="left:1093px;top:378px">Sales Person - Closer - Hire</div>
<div class="ar" style="left:592.0px;top:386px;border-top-color:#e0302c"></div>
<div class="ar" style="left:757.5px;top:386px;border-top-color:#e0302c"></div>
<div class="ar" style="left:867.7px;top:386px;border-top-color:#e0302c"></div>
<div class="ar" style="left:1006.5px;top:386px;border-top-color:#e0302c"></div>
<div class="ar" style="left:1077.8px;top:386px;border-top-color:#e0302c"></div>
<div class="rw" style="top:397px;background:#f4cccc;border-bottom-color:#e2baba"></div>
<div class="rn" style="top:396px">15</div>
<div class="a" style="left:0;top:414px;width:35px;height:1px;background:#e1e3e1"></div>
<div class="t" style="left:39px;top:396px">Weekly Video - NOME</div>
<div class="t tr" style="left:323px;width:118px;top:396px">1</div>
<div class="t" style="left:447px;top:396px"><svg class="em" width="12" height="12" viewBox="0 0 12 12" style="overflow:visible"><path d="M2 -0.6 H9.8 Q11 -0.6 11 0.7 V4.7 Q11 6 9.8 6 H7.4 L7.3 9.6 Q7.1 10.8 6 10.8 Q4.9 10.7 4.8 9.5 L4.6 6 H1.5 Q0.2 6 0.2 4.6 V1 Q0.2 -0.6 2 -0.6Z" fill="#f6c234"/><path d="M7.6 -0.4V5.8M7.8 1.4H10.8M7.8 3.5H10.8" stroke="#dc9a22" stroke-width="0.6" fill="none"/><path d="M0.8 5.6H4.6M4.9 6.2L5.1 9.8" stroke="#e0902a" stroke-width="0.7" fill="none"/></svg></div>
<div class="t" style="left:462px;top:396px">Takes My Energy</div>
<div class="t" style="left:607px;top:396px">4 - Despise</div>
<div class="t" style="left:773px;top:396px">3 - Technician</div>
<div class="t" style="left:883px;top:396px">Operations</div>
<div class="t" style="left:1022px;top:396px">S</div>
<div class="t" style="left:1093px;top:396px">New Owner</div>
<div class="ar" style="left:592.0px;top:404px;border-top-color:#e0302c"></div>
<div class="ar" style="left:757.5px;top:404px;border-top-color:#e0302c"></div>
<div class="ar" style="left:867.7px;top:404px;border-top-color:#e0302c"></div>
<div class="ar" style="left:1006.5px;top:404px;border-top-color:#e0302c"></div>
<div class="ar" style="left:1077.8px;top:404px;border-top-color:#e0302c"></div>
<div class="rw" style="top:415px;background:#f4cccc;border-bottom-color:#e2baba"></div>
<div class="rn" style="top:414px">16</div>
<div class="a" style="left:0;top:432px;width:35px;height:1px;background:#e1e3e1"></div>
<div class="t" style="left:39px;top:414px">Writing Emails</div>
<div class="t tr" style="left:323px;width:118px;top:414px">1.5</div>
<div class="t" style="left:447px;top:414px">Neutral</div>
<div class="t" style="left:607px;top:414px">2 - Excellent</div>
<div class="t" style="left:773px;top:414px">3 - Technician</div>
<div class="t" style="left:883px;top:414px">Operations</div>
<div class="t" style="left:1022px;top:414px">S</div>
<div class="t" style="left:1093px;top:414px">New Owner</div>
<div class="ar" style="left:592.0px;top:422px;border-top-color:#e0302c"></div>
<div class="ar" style="left:757.5px;top:422px;border-top-color:#e0302c"></div>
<div class="ar" style="left:867.7px;top:422px;border-top-color:#e0302c"></div>
<div class="ar" style="left:1006.5px;top:422px;border-top-color:#e0302c"></div>
<div class="ar" style="left:1077.8px;top:422px;border-top-color:#e0302c"></div>
<div class="rw" style="top:433px;background:#f4cccc;border-bottom-color:#e2baba"></div>
<div class="rn" style="top:432px">17</div>
<div class="a" style="left:0;top:450px;width:35px;height:1px;background:#e1e3e1"></div>
<div class="t" style="left:39px;top:432px">Coaching Clients - Marketing / Technical</div>
<div class="t tr" style="left:323px;width:118px;top:432px">3</div>
<div class="t" style="left:447px;top:432px"><svg class="em" width="12" height="12" viewBox="0 0 12 12" style="overflow:visible"><path d="M2 -0.6 H9.8 Q11 -0.6 11 0.7 V4.7 Q11 6 9.8 6 H7.4 L7.3 9.6 Q7.1 10.8 6 10.8 Q4.9 10.7 4.8 9.5 L4.6 6 H1.5 Q0.2 6 0.2 4.6 V1 Q0.2 -0.6 2 -0.6Z" fill="#f6c234"/><path d="M7.6 -0.4V5.8M7.8 1.4H10.8M7.8 3.5H10.8" stroke="#dc9a22" stroke-width="0.6" fill="none"/><path d="M0.8 5.6H4.6M4.9 6.2L5.1 9.8" stroke="#e0902a" stroke-width="0.7" fill="none"/></svg></div>
<div class="t" style="left:462px;top:432px">Takes My Energy</div>
<div class="t" style="left:607px;top:432px">2 - Excellent</div>
<div class="t" style="left:773px;top:432px">3 - Technician</div>
<div class="t" style="left:883px;top:432px">Operations</div>
<div class="t" style="left:1022px;top:432px">S</div>
<div class="t" style="left:1093px;top:432px">Coach - Technical Person - Jayden?</div>
<div class="ar" style="left:592.0px;top:440px;border-top-color:#e0302c"></div>
<div class="ar" style="left:757.5px;top:440px;border-top-color:#e0302c"></div>
<div class="ar" style="left:867.7px;top:440px;border-top-color:#e0302c"></div>
<div class="ar" style="left:1006.5px;top:440px;border-top-color:#e0302c"></div>
<div class="ar" style="left:1077.8px;top:440px;border-top-color:#e0302c"></div>
<div class="rw" style="top:451px;background:#f4cccc;border-bottom-color:#e2baba"></div>
<div class="rn" style="top:450px">18</div>
<div class="a" style="left:0;top:468px;width:35px;height:1px;background:#e1e3e1"></div>
<div class="t" style="left:39px;top:450px">Coaching Clients - Mindset</div>
<div class="t tr" style="left:323px;width:118px;top:450px">1</div>
<div class="t" style="left:447px;top:450px"><svg class="em" width="12" height="12" viewBox="0 0 12 12" style="overflow:visible"><path d="M4.6 4.5 L5 1.2 Q5.3 -0.1 6.5 0 Q7.9 0.2 7.9 1.6 L7.8 4.3 H10 Q11.2 4.4 11.1 5.6 V9.1 Q11 10.3 9.8 10.3 H2.2 Q0.8 10.3 0.8 8.9 V5.8 Q0.8 4.5 2.2 4.5 Z" fill="#f6c234"/><path d="M7.9 4.6V10.2M8.1 6.4H11M8.1 8.3H11" stroke="#dc9a22" stroke-width="0.6" fill="none"/><path d="M1.2 9.6H7.6" stroke="#e0902a" stroke-width="0.7"/></svg></div>
<div class="t" style="left:465px;top:450px">Gives Me Energy</div>
<div class="t" style="left:607px;top:450px">1 - Telos (Unique Ability)</div>
<div class="t" style="left:773px;top:450px">3 - Technician</div>
<div class="t" style="left:883px;top:450px">Operations</div>
<div class="t" style="left:1022px;top:450px">S</div>
<div class="t" style="left:1093px;top:450px">Coach - Mindset Person - Magic?</div>
<div class="ar" style="left:592.0px;top:458px;border-top-color:#e0302c"></div>
<div class="ar" style="left:757.5px;top:458px;border-top-color:#e0302c"></div>
<div class="ar" style="left:867.7px;top:458px;border-top-color:#e0302c"></div>
<div class="ar" style="left:1006.5px;top:458px;border-top-color:#e0302c"></div>
<div class="ar" style="left:1077.8px;top:458px;border-top-color:#e0302c"></div>
<div class="rw" style="top:469px;background:#f4cccc;border-bottom-color:#e2baba"></div>
<div class="rn" style="top:468px">19</div>
<div class="a" style="left:0;top:486px;width:35px;height:1px;background:#e1e3e1"></div>
<div class="t" style="left:39px;top:468px">Paying Bills</div>
<div class="t tr" style="left:323px;width:118px;top:468px">1</div>
<div class="t" style="left:447px;top:468px"><svg class="em" width="12" height="12" viewBox="0 0 12 12" style="overflow:visible"><path d="M2 -0.6 H9.8 Q11 -0.6 11 0.7 V4.7 Q11 6 9.8 6 H7.4 L7.3 9.6 Q7.1 10.8 6 10.8 Q4.9 10.7 4.8 9.5 L4.6 6 H1.5 Q0.2 6 0.2 4.6 V1 Q0.2 -0.6 2 -0.6Z" fill="#f6c234"/><path d="M7.6 -0.4V5.8M7.8 1.4H10.8M7.8 3.5H10.8" stroke="#dc9a22" stroke-width="0.6" fill="none"/><path d="M0.8 5.6H4.6M4.9 6.2L5.1 9.8" stroke="#e0902a" stroke-width="0.7" fill="none"/></svg></div>
<div class="t" style="left:462px;top:468px">Takes My Energy</div>
<div class="t" style="left:607px;top:468px">4 - Despise</div>
<div class="t" style="left:773px;top:468px">4 - Admin</div>
<div class="t" style="left:883px;top:468px">Finances</div>
<div class="t" style="left:1022px;top:468px">S</div>
<div class="t" style="left:1093px;top:468px">New Owner</div>
<div class="ar" style="left:592.0px;top:476px;border-top-color:#e0302c"></div>
<div class="ar" style="left:757.5px;top:476px;border-top-color:#e0302c"></div>
<div class="ar" style="left:867.7px;top:476px;border-top-color:#e0302c"></div>
<div class="ar" style="left:1006.5px;top:476px;border-top-color:#e0302c"></div>
<div class="ar" style="left:1077.8px;top:476px;border-top-color:#e0302c"></div>
<div class="rw" style="top:487px;background:#f4cccc;border-bottom-color:#e2baba"></div>
<div class="rn" style="top:486px">20</div>
<div class="a" style="left:0;top:504px;width:35px;height:1px;background:#e1e3e1"></div>
<div class="t" style="left:39px;top:486px">General Admin - Business</div>
<div class="t tr" style="left:323px;width:118px;top:486px">2</div>
<div class="t" style="left:447px;top:486px"><svg class="em" width="12" height="12" viewBox="0 0 12 12" style="overflow:visible"><path d="M2 -0.6 H9.8 Q11 -0.6 11 0.7 V4.7 Q11 6 9.8 6 H7.4 L7.3 9.6 Q7.1 10.8 6 10.8 Q4.9 10.7 4.8 9.5 L4.6 6 H1.5 Q0.2 6 0.2 4.6 V1 Q0.2 -0.6 2 -0.6Z" fill="#f6c234"/><path d="M7.6 -0.4V5.8M7.8 1.4H10.8M7.8 3.5H10.8" stroke="#dc9a22" stroke-width="0.6" fill="none"/><path d="M0.8 5.6H4.6M4.9 6.2L5.1 9.8" stroke="#e0902a" stroke-width="0.7" fill="none"/></svg></div>
<div class="t" style="left:462px;top:486px">Takes My Energy</div>
<div class="t" style="left:607px;top:486px">4 - Despise</div>
<div class="t" style="left:773px;top:486px">4 - Admin</div>
<div class="t" style="left:883px;top:486px">Finances</div>
<div class="t" style="left:1022px;top:486px">S</div>
<div class="t" style="left:1093px;top:486px">New Owner</div>
<div class="ar" style="left:592.0px;top:494px;border-top-color:#e0302c"></div>
<div class="ar" style="left:757.5px;top:494px;border-top-color:#e0302c"></div>
<div class="ar" style="left:867.7px;top:494px;border-top-color:#e0302c"></div>
<div class="ar" style="left:1006.5px;top:494px;border-top-color:#e0302c"></div>
<div class="ar" style="left:1077.8px;top:494px;border-top-color:#e0302c"></div>
<div class="rw" style="top:505px;background:#d9d2e9;border-bottom-color:#c6bfd6"></div>
<div class="rn" style="top:504px">21</div>
<div class="a" style="left:0;top:522px;width:35px;height:1px;background:#e1e3e1"></div>
<div class="t" style="left:39px;top:504px">Runing Facebook Ads</div>
<div class="t tr" style="left:323px;width:118px;top:504px">2</div>
<div class="t" style="left:447px;top:504px">Neutral</div>
<div class="t" style="left:607px;top:504px">2 - Excellent</div>
<div class="t" style="left:773px;top:504px">3 - Technician</div>
<div class="t" style="left:883px;top:504px">Lead Generation</div>
<div class="t" style="left:1022px;top:504px">S</div>
<div class="t" style="left:1093px;top:504px">Jay + Team - Agency</div>
<div class="ar" style="left:592.0px;top:512px;border-top-color:#9e9aa8"></div>
<div class="ar" style="left:757.5px;top:512px;border-top-color:#9e9aa8"></div>
<div class="ar" style="left:867.7px;top:512px;border-top-color:#9e9aa8"></div>
<div class="ar" style="left:1006.5px;top:512px;border-top-color:#9e9aa8"></div>
<div class="ar" style="left:1077.8px;top:512px;border-top-color:#9e9aa8"></div>
<div class="rw" style="top:523px;background:#d9d2e9;border-bottom-color:#c6bfd6"></div>
<div class="rn" style="top:522px">22</div>
<div class="a" style="left:0;top:540px;width:35px;height:1px;background:#e1e3e1"></div>
<div class="t" style="left:39px;top:522px">Building Funnel Pages</div>
<div class="t tr" style="left:323px;width:118px;top:522px">3</div>
<div class="t" style="left:447px;top:522px">Neutral</div>
<div class="t" style="left:607px;top:522px">3 - Competant</div>
<div class="t" style="left:773px;top:522px">3 - Technician</div>
<div class="t" style="left:883px;top:522px">Lead Generation</div>
<div class="t" style="left:1022px;top:522px">S</div>
<div class="t" style="left:1093px;top:522px"></div>
<div class="ar" style="left:592.0px;top:530px;border-top-color:#9e9aa8"></div>
<div class="ar" style="left:757.5px;top:530px;border-top-color:#9e9aa8"></div>
<div class="ar" style="left:867.7px;top:530px;border-top-color:#9e9aa8"></div>
<div class="ar" style="left:1006.5px;top:530px;border-top-color:#9e9aa8"></div>
<div class="ar" style="left:1077.8px;top:530px;border-top-color:#9e9aa8"></div>
<!-- row header lines -->
<div class="a" style="left:35px;top:121px;width:1px;height:420px;background:#d0d2d4"></div>
<div class="vl" style="left:444px;top:121px;height:420px;background:#00000018"></div>
<div class="vl" style="left:604px;top:121px;height:420px;background:#00000018"></div>
<div class="vl" style="left:770px;top:121px;height:420px;background:#00000018"></div>
<div class="vl" style="left:880px;top:121px;height:420px;background:#00000018"></div>
<div class="vl" style="left:1019px;top:121px;height:420px;background:#00000018"></div>
<div class="vl" style="left:1090px;top:121px;height:420px;background:#00000018"></div>
<div class="vl" style="left:1282px;top:121px;height:420px;background:#00000018"></div>
<!-- frozen col separator -->
<div class="a" style="left:319px;top:121px;width:4px;height:420px;background:#c8c8c8"></div>
<!-- scrollbar -->
<div class="a" style="left:1282px;top:121px;width:10px;height:420px;background:#fbfbfb;border-left:1px solid #e3e3e3"></div>
<div class="a" style="left:1283px;top:159px;width:9px;height:4px;background:#e2e4e6"></div>
<div class="a" style="left:1284px;top:164px;width:7px;height:21px;border-radius:4px;background:#dadce0"></div>
</body></html>
